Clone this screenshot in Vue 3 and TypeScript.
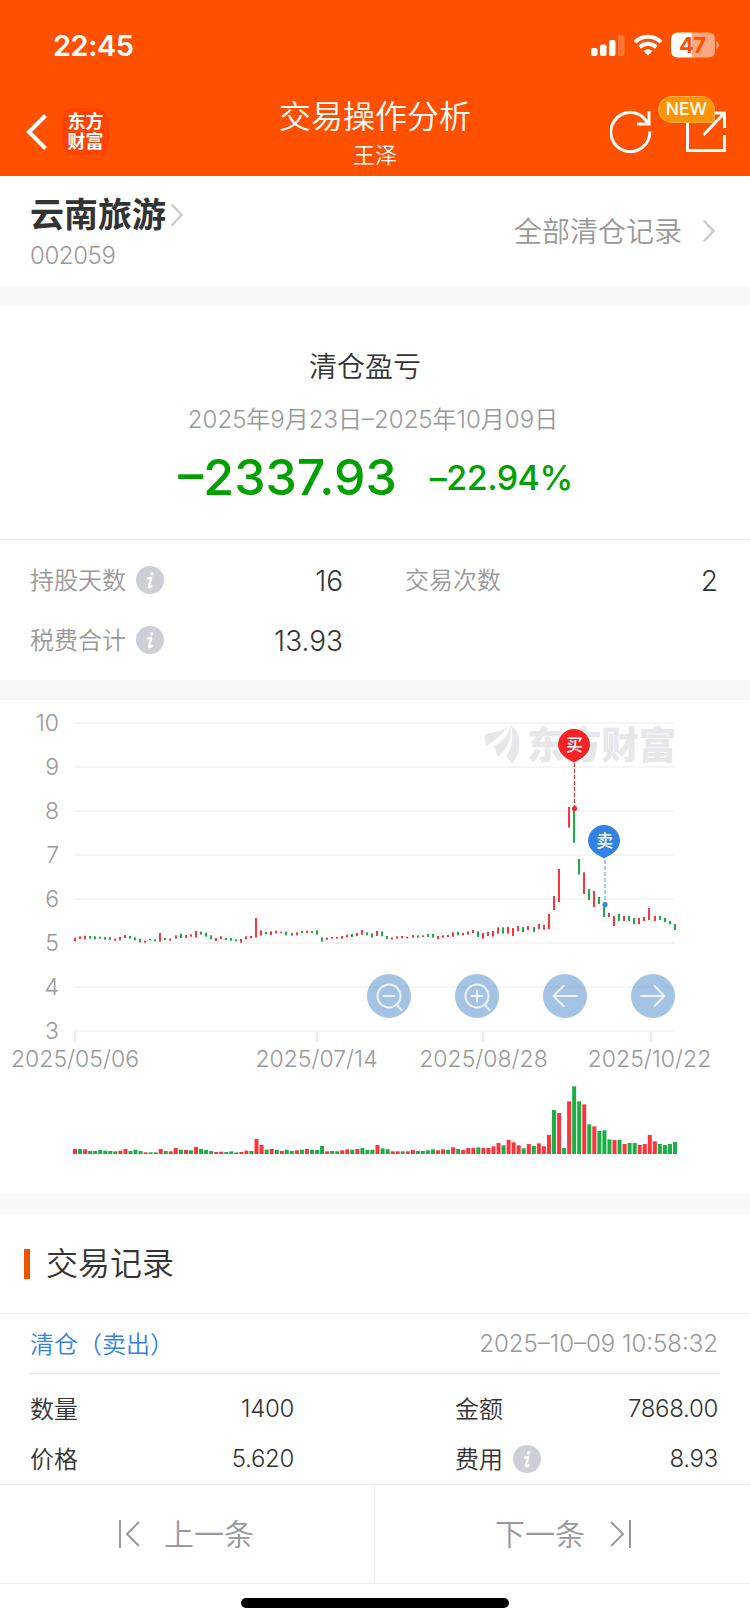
<script setup lang="ts">
type Tone = 'r' | 'g'

interface Bar {
  x: number
  y: number
  h: number
  tone: Tone
}

const STEP = 600 / 119

// Daily price ranges: tone, top and bottom in thirds of a pixel.
const priceRows = `r713-724 r709-717 r707-718 g708-716 g709-718 g710-716 g711-719 g711-719 r716-722 r711-721
r705-714 g708-716 g712-721 g717-727 r722-728 g717-721 g718-724 r699-725 g714-720 r716-722
r706-716 g701-714 r705-714 r703-710 r693-713 g695-704 g698-710 g706-718 r714-723 r709-717
g714-720 g714-722 g718-724 r717-728 r709-718 r708-715 r654-713 r691-707 g696-703 r694-705
r692-700 r695-699 g695-706 g699-707 r697-706 g693-699 r692-699 g693-699 g691-704 g712-725
r713-719 r711-716 r711-716 r708-716 r704-712 g702-711 r699-708 r690-704 g697-706 g700-713
r693-708 g694-709 g708-717 r712-719 r709-716 r708-715 r710-715 r705-713 g706-713 r706-711
g702-711 g702-713 r708-717 r706-713 r705-711 r697-710 g696-706 r699-706 r694-704 r690-699
g694-711 r699-716 r696-708 r693-710 r682-701 g682-701 r681-701 r684-708 r678-693 g681-696
r678-691 g681-696 r672-687 r675-689 r642-687 r588-630 r507-606 r0-0 r321-383 g333-428
g477-524 r517-582 g567-600 r573-621 g591-612 g621-651 r639-651 r648-678 g642-663 r648-663
g648-663 g654-672 r654-672 r651-663 r624-660 r648-663 g648-660 g654-666 g663-673 g672-690`

// Daily volume: tone and height in thirds of a pixel.
const volumeRows = `r15 g15 r14 g9 g9 g12 g10 g9 g8 r10 r15 g9 g13 g9 r5 g5 g5 r15 g9 r8
r18 g13 r12 g11 r21 g15 g12 g9 r6 r7 g6 g8 g5 r6 r10 g9 r45 r27 g13 r15
g12 r9 g13 g9 r11 g13 r15 g13 g12 g24 r8 g9 g8 r11 r14 g13 r15 g18 g12 g13
r27 g17 g14 r8 r8 g8 r8 r12 g9 g9 g11 g14 r11 r14 g12 r20 g15 r12 r18 r18
g20 r18 r18 r23 r33 g26 r42 r35 r26 g17 r30 g24 r32 r23 r57 g132 r123 g18 r158 g203
g158 r149 g89 r83 g69 g71 g44 r42 g42 r30 g33 g33 r27 r30 r57 r38 g30 g27 g30 g36`

const candles: Bar[] = priceRows.split(/\s+/).map((row, i) => {
  const [top, bottom] = row.slice(1).split('-').map(Number)
  return {
    x: Math.round(74 + i * STEP - 0.3),
    y: top / 3,
    h: (bottom - top) / 3,
    tone: row[0] as Tone,
  }
})

const volumes: Bar[] = volumeRows.split(/\s+/).map((row, i) => {
  const h = Number(row.slice(1)) / 3
  return { x: 73 + i * STEP, y: 454 - h, h, tone: row[0] as Tone }
})

const levels = [10, 9, 8, 7, 6, 5, 4, 3].map((value, i) => ({ value, y: 23 + i * 44 }))

const dates = [
  { label: '2025/05/06', tick: 75, x: 75 },
  { label: '2025/07/14', tick: 317, x: 316.5 },
  { label: '2025/08/28', tick: 483, x: 483.5 },
  { label: '2025/10/22', tick: 651, x: 649.5 },
]

const controls = [
  { name: 'out', x: 389 },
  { name: 'in', x: 477 },
  { name: 'left', x: 565 },
  { name: 'right', x: 653 },
]
</script>

<template>
  <div class="page">
    <svg width="0" height="0" class="defs">
      <symbol id="info" viewBox="0 0 28 28">
        <circle cx="14" cy="14" r="14" fill="#ccd0d6" />
        <circle cx="15.800" cy="7.700" r="1.700" fill="#fff" />
        <path d="M12 12.500Q14 12 15.300 11.800L12.900 20.500Q12.600 22.300 15.800 20.200" fill="none" stroke="#fff" stroke-width="2.200" stroke-linecap="round" stroke-linejoin="round" />
      </symbol>
    </svg>
    <header class="top">
      <div class="status">
        <span class="clock">22:45</span>
        <div class="signals">
          <svg width="34" height="22" viewBox="0 0 34 22">
            <rect x="0" y="14" width="6.500" height="8" rx="2" fill="#fff" />
            <rect x="9" y="10.500" width="6.500" height="11.500" rx="2" fill="#fff" />
            <rect x="18" y="6" width="6.500" height="16" rx="2" fill="#fff" />
            <rect x="27" y="1" width="6.500" height="21" rx="2" fill="#fff" opacity=".22" />
          </svg>
          <svg class="wifi" width="30" height="22" viewBox="0 0 30 22">
            <g fill="none" stroke="#fff" stroke-width="4">
              <path d="M2 8.200C9 .9 21 .9 28 8.200" />
              <path d="M6.700 13.200C11.400 8.600 18.600 8.600 23.300 13.200" />
            </g>
            <path d="M10.500 17C13 14.700 17 14.700 19.500 17L15 21.500Z" fill="#fff" />
          </svg>
          <svg class="battery" width="49" height="26" viewBox="0 0 49 26">
            <path d="M7 .5H21V25.500H7Q0 25.500 0 18.500V7.500Q0 .5 7 .5Z" fill="#fff" />
            <path d="M21 .5H37Q44 .5 44 7.500V18.500Q44 25.500 37 25.500H21Z" fill="#ffa880" />
            <path d="M45.500 9Q48 10.500 48 13T45.500 17Z" fill="#ffa880" />
            <text x="21.500" y="20.500" text-anchor="middle" font-size="22" font-weight="650" fill="#ff5000" textLength="27">47</text>
          </svg>
        </div>
      </div>
      <div class="nav">
        <div class="nav-left">
          <svg width="22" height="38" viewBox="0 0 22 38">
            <path d="M19.500 2.500L3 19L19.500 35.500" fill="none" stroke="#fff" stroke-width="4" />
          </svg>
          <div class="brand"><span>东方</span><span>财富</span></div>
        </div>
        <div class="title">
          <h1>交易操作分析</h1>
          <p>王泽</p>
        </div>
        <div class="nav-right">
          <svg width="42" height="44" viewBox="0 0 42 44">
            <g fill="none" stroke="#fff" stroke-width="3">
              <path d="M39.800 22.500A19.500 19.500 0 1 1 36 11.500L39 15" />
              <path d="M39 2V15H27" />
            </g>
          </svg>
          <div class="share">
            <svg width="40" height="42" viewBox="0 0 40 42">
              <g fill="none" stroke="#fff" stroke-width="3">
                <path d="M14 3H1.500V40.500H38.500V25" />
                <path d="M28 3H38.500V18M38 3.500L17.500 25" />
              </g>
            </svg>
            <span class="badge">NEW</span>
          </div>
        </div>
      </div>
    </header>

    <section class="stock">
      <div>
        <div class="stock-name">
          <strong>云南旅游</strong>
          <svg width="12" height="24" viewBox="0 0 12 24">
            <path d="M.8 1.500L10.500 12L.8 22.500" fill="none" stroke="#ccc" stroke-width="2.400" />
          </svg>
        </div>
        <div class="code">002059</div>
      </div>
      <div class="all-records">
        <span>全部清仓记录</span>
        <svg width="12" height="24" viewBox="0 0 12 24">
          <path d="M.8 1.500L10.500 12L.8 22.500" fill="none" stroke="#ccc" stroke-width="2.400" />
        </svg>
      </div>
    </section>

    <div class="gap"></div>

    <section class="profit">
      <h2>清仓盈亏</h2>
      <p class="range">2025年9月23日–2025年10月09日</p>
      <div class="amount"><b>–2337.93</b><em>–22.94%</em></div>
    </section>

    <section class="stats">
      <div class="stat">
        <span>持股天数</span>
        <svg class="info"><use href="#info" /></svg>
        <b>16</b>
      </div>
      <div class="stat"><span>交易次数</span><b>2</b></div>
      <div class="stat">
        <span>税费合计</span>
        <svg class="info"><use href="#info" /></svg>
        <b>13.93</b>
      </div>
    </section>

    <div class="gap"></div>

    <svg class="chart" width="750" height="494" viewBox="0 0 750 494">
      <g v-for="level in levels" :key="level.value">
        <rect x="75" :y="level.y - 1" width="600" height="2" fill="#f5f5f5" />
        <text class="axis" x="59" :y="level.y + 8" text-anchor="end">{{ level.value }}</text>
      </g>
      <g v-for="date in dates" :key="date.label">
        <rect :x="date.tick - 1" y="331" width="2" height="11" fill="#ececec" />
        <text class="axis" :x="date.x" y="367" text-anchor="middle">{{ date.label }}</text>
      </g>

      <g fill="#e6e6eb">
        <path d="M485 35C492 31 501 33 508 26C501 36 493 42 486 46C485 42 485 38 485 35Z" />
        <path d="M494 46C503 42 509 35 510 26C513 37 507 50 498 57Z" />
        <path d="M511 26C521 31 523 50 512 64C510 60 508 57 506 56C512 49 514 38 511 26Z" />
        <text class="mark" x="527" y="59" textLength="149" lengthAdjust="spacingAndGlyphs">东方财富</text>
      </g>

      <rect
        v-for="(bar, i) in candles"
        :key="'p' + i"
        :class="bar.tone"
        :x="bar.x"
        :y="bar.y"
        width="2"
        :height="bar.h"
      />
      <rect
        v-for="(bar, i) in volumes"
        :key="'v' + i"
        :class="bar.tone"
        :x="bar.x"
        :y="bar.y"
        width="4"
        :height="bar.h"
      />

      <g>
        <path d="M574.500 63V106" stroke="#f4272b" stroke-dasharray="4 2" />
        <circle cx="574.500" cy="108.500" r="2.600" fill="#f4272b" />
        <path d="M566 58Q558 52 558 45A16 16 0 0 1 590 45Q590 52 582 58L574 62.500Z" fill="#f52325" />
        <text class="pin" x="574.500" y="51">买</text>
      </g>
      <g>
        <path d="M605 160V202" stroke="#8ab6ef" stroke-width="1.500" stroke-dasharray="4 2" />
        <circle cx="605" cy="204.500" r="2.600" fill="#3382e3" />
        <path d="M596 154Q588 148 588 141A16 16 0 0 1 620 141Q620 148 612 154L604 158.500Z" fill="#3382e3" />
        <text class="pin" x="604.700" y="147">卖</text>
      </g>

      <g v-for="control in controls" :key="control.name" :transform="`translate(${control.x} 296)`">
        <circle r="22" fill="#6699d2" opacity=".6" />
        <g class="glyph">
          <template v-if="control.name === 'out' || control.name === 'in'">
            <circle r="11.500" />
            <path d="M7.500 8.500L12.500 14M-5.500 0H5.500" />
            <path v-if="control.name === 'in'" d="M0 -5.500V5.500" />
          </template>
          <path v-else-if="control.name === 'left'" d="M12 0H-11.500M-1.500 -10L-11.500 0L-1.500 10" />
          <path v-else d="M-12 0H11.500M1.500 -10L11.500 0L1.500 10" />
        </g>
      </g>
    </svg>

    <div class="gap"></div>

    <section class="records">
      <div class="records-title"><i></i><h2>交易记录</h2></div>
      <div class="record-head">
        <span>清仓（卖出）</span>
        <time>2025–10–09 10:58:32</time>
      </div>
      <div class="record-grid">
        <div class="cell"><span>数量</span><b>1400</b></div>
        <div class="cell"><span>金额</span><b>7868.00</b></div>
        <div class="cell"><span>价格</span><b>5.620</b></div>
        <div class="cell">
          <span>费用</span>
          <svg class="info"><use href="#info" /></svg>
          <b>8.93</b>
        </div>
      </div>
    </section>

    <footer class="pager">
      <div class="prev">
        <svg width="21" height="28" viewBox="0 0 21 28">
          <path d="M1 0V28M20 2L8 14L20 26" fill="none" stroke="#999" stroke-width="2" />
        </svg>
        <span>上一条</span>
      </div>
      <div class="next">
        <span>下一条</span>
        <svg width="21" height="28" viewBox="0 0 21 28">
          <path d="M20 0V28M1 2L13 14L1 26" fill="none" stroke="#999" stroke-width="2" />
        </svg>
      </div>
    </footer>
    <div class="home"><i></i></div>
  </div>
</template>

<style>
body {
  margin: 0;
  background: #fff;
}
</style>

<style scoped>
.page {
  width: 750px;
  height: 1624px;
  overflow: hidden;
  display: flex;
  flex-direction: column;
  background: #fff;
  color: #333;
  font-family: Inter, 'Noto Sans CJK SC', sans-serif;
  font-size: 24px;
  font-weight: 350;
}
h1,
h2,
p {
  margin: 0;
  font-weight: 350;
}
b,
em,
i {
  font-style: normal;
  font-weight: 350;
}
svg {
  display: block;
  flex: none;
}
.defs {
  position: absolute;
}
.top {
  height: 176px;
  flex: none;
  background: #ff5000;
  color: #fff;
}
.status {
  height: 88px;
  display: flex;
  justify-content: space-between;
  align-items: center;
  padding: 0 30px 0 53px;
  box-sizing: border-box;
}
.clock {
  font-size: 29px;
  font-weight: 600;
  letter-spacing: -0.5px;
  margin-top: 2px;
}
.signals {
  display: flex;
  align-items: center;
  margin-top: 1px;
}
.wifi {
  margin-left: 8px;
}
.battery {
  margin-left: 8px;
}
.nav {
  height: 88px;
  display: grid;
  grid-template-columns: 200px 1fr 200px;
}
.nav-left {
  display: flex;
  align-items: flex-start;
  padding-left: 26px;
}
.nav-left svg {
  margin-top: 25px;
}
.brand {
  width: 47px;
  height: 47px;
  box-sizing: border-box;
  padding-top: 4px;
  margin: 20px 0 0 14px;
  border-radius: 12px;
  background: #ff4300;
  display: flex;
  flex-direction: column;
  align-items: center;
  font-size: 18px;
  line-height: 20px;
  font-weight: 700;
}
.title {
  text-align: center;
}
.title h1 {
  font-size: 32px;
  line-height: 44px;
  margin-top: 7px;
}
.title p {
  font-size: 22px;
  line-height: 30px;
  margin-top: 1px;
}
.nav-right {
  display: flex;
  align-items: flex-start;
  padding: 21px 0 0 60px;
}
.share {
  position: relative;
  margin: 1px 0 0 34px;
}
.badge {
  position: absolute;
  left: -28px;
  top: -14px;
  width: 57px;
  height: 27px;
  box-sizing: border-box;
  border: 1.5px solid #ffb04d;
  border-radius: 14px 14px 3px 14px;
  background: #ff9400;
  font-size: 17.5px;
  line-height: 24px;
  font-weight: 500;
  text-align: center;
}
.stock {
  height: 110px;
  flex: none;
  box-sizing: border-box;
  display: flex;
  justify-content: space-between;
  padding: 15px 35px 0 30px;
}
.stock-name {
  display: flex;
  align-items: center;
  gap: 5px;
  height: 48px;
}
.stock-name strong {
  font-size: 34px;
  line-height: 48px;
  font-weight: 600;
}
.code {
  line-height: 30px;
  margin-top: 2px;
  color: #999;
  letter-spacing: -0.4px;
}
.all-records {
  height: 40px;
  margin-top: 20px;
  display: flex;
  align-items: center;
  gap: 21px;
  font-size: 28px;
  color: #999;
}
.all-records span {
  margin-top: -3px;
}
.gap {
  height: 20px;
  flex: none;
  background: #f7f7f7;
}
.profit {
  height: 234px;
  flex: none;
  box-sizing: border-box;
  border-bottom: 1px solid #ececec;
  text-align: center;
}
.profit h2 {
  font-size: 28px;
  line-height: 40px;
  margin-top: 41px;
  padding-right: 20px;
}
.range {
  color: #999;
  line-height: 34px;
  margin-top: 16px;
  padding-right: 4px;
}
.amount {
  display: flex;
  justify-content: center;
  align-items: center;
  gap: 33px;
  height: 60px;
  margin-top: 10px;
  padding-left: 1px;
  color: #00a000;
}
.amount b {
  font-size: 50px;
  font-weight: 500;
}
.amount em {
  font-size: 34px;
  font-weight: 500;
  letter-spacing: -0.5px;
  margin-top: 1px;
}
.stats {
  height: 140px;
  flex: none;
  box-sizing: border-box;
  padding: 10px 0 10px;
  display: grid;
  grid-template-columns: 375px 375px;
  grid-template-rows: 60px 60px;
}
.stat {
  display: flex;
  align-items: center;
  padding: 0 32px 0 30px;
}
.stat span {
  color: #999;
  margin-top: -4px;
}
.stat b {
  margin-left: auto;
  font-size: 28px;
  margin-top: 1px;
}
.info {
  width: 28px;
  height: 28px;
  margin-left: 10px;
}
.axis {
  font-size: 23px;
  fill: #999;
}
.mark {
  font-size: 37px;
  font-weight: 900;
}
.pin {
  font-size: 17px;
  font-weight: 500;
  fill: #fff;
  text-anchor: middle;
}
.glyph {
  fill: none;
  stroke: #edf3fa;
  stroke-width: 2;
  stroke-linecap: round;
}
.r {
  fill: #fc353c;
}
.g {
  fill: #1aaf44;
}
.records-title {
  height: 100px;
  box-sizing: border-box;
  border-bottom: 1px solid #ececec;
  display: flex;
  align-items: center;
  padding-left: 24px;
  gap: 16px;
}
.records-title i {
  width: 6px;
  height: 30px;
  background: #eb5500;
}
.records-title h2 {
  font-size: 32px;
  line-height: 46px;
}
.record-head {
  height: 60px;
  box-sizing: border-box;
  margin: 0 30px;
  padding-right: 2px;
  border-bottom: 1px solid #ececec;
  display: flex;
  justify-content: space-between;
  align-items: center;
}
.record-head span {
  color: #3382e3;
  margin-top: -3px;
}
.record-head time {
  color: #999;
}
.record-grid {
  padding: 10px 0 0 30px;
  display: grid;
  grid-template-columns: 264px 263px;
  column-gap: 161px;
  grid-auto-rows: 50px;
}
.cell {
  display: flex;
  align-items: center;
}
.cell span {
  margin-top: -4px;
}
.cell b {
  margin-left: auto;
  margin-top: -1px;
  letter-spacing: -0.3px;
}
.pager {
  margin-top: auto;
  height: 100px;
  flex: none;
  box-sizing: border-box;
  border-top: 1px solid #ececec;
  border-bottom: 1px solid #ececec;
  display: grid;
  grid-template-columns: 375px 375px;
  font-size: 30px;
  color: #999;
}
.pager div {
  display: flex;
  align-items: center;
  gap: 25px;
}
.pager span {
  margin-top: -4px;
}
.pager .prev {
  gap: 24px;
  padding-left: 119px;
  box-sizing: border-box;
  border-right: 1px solid #ececec;
}
.next {
  padding-left: 120px;
}
.home {
  height: 40px;
  flex: none;
  display: flex;
  justify-content: center;
}
.home i {
  width: 268px;
  height: 10px;
  margin-top: 14px;
  border-radius: 5px;
  background: #000;
}
</style>
